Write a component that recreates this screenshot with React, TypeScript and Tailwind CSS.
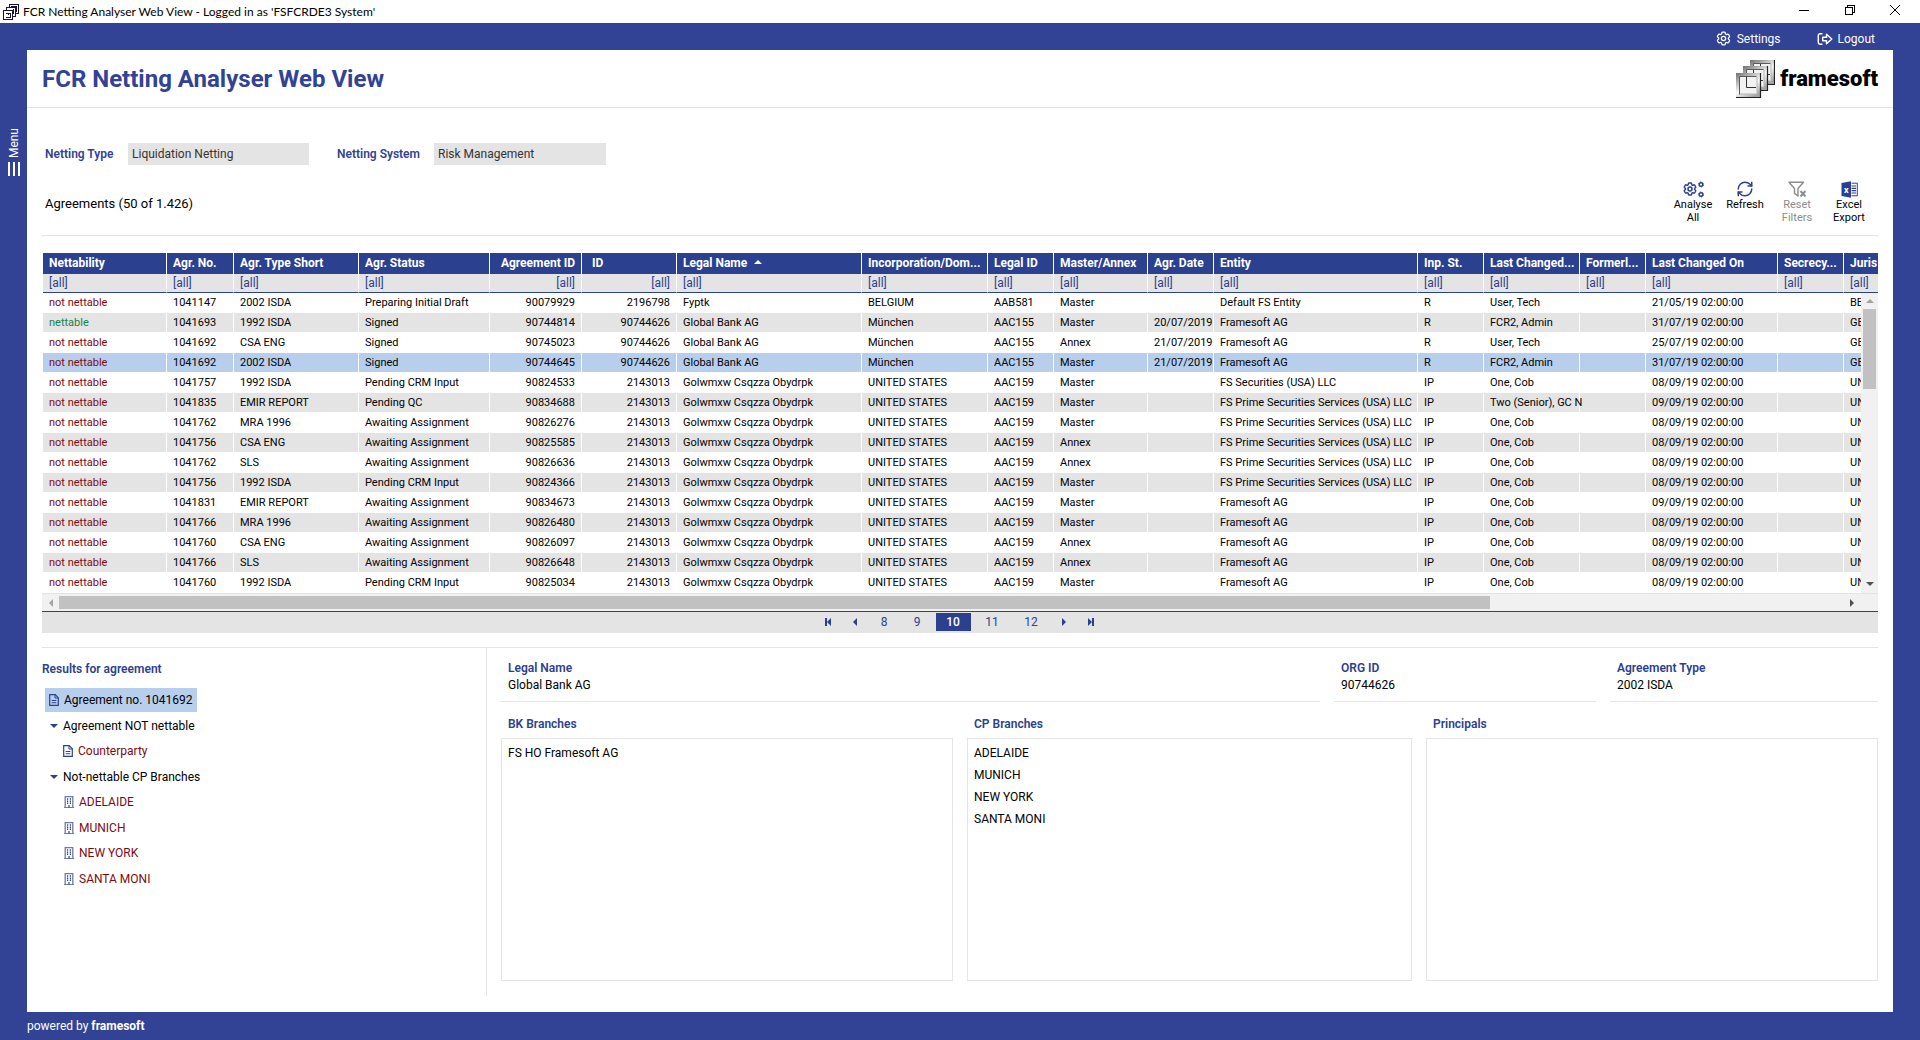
import { useState } from "react";
import { RefreshCw } from "lucide-react";
import { HiOutlineCog6Tooth } from "react-icons/hi2";

type Column = {
  title: string;
  width: string;
  right?: boolean;
  titleLeft?: boolean;
  sorted?: boolean;
};

const columns: Column[] = [
  { title: "Nettability", width: "w-[124px]" },
  { title: "Agr. No.", width: "w-[67px]" },
  { title: "Agr. Type Short", width: "w-[125px]" },
  { title: "Agr. Status", width: "w-[131px]" },
  { title: "Agreement ID", width: "w-[92px]", right: true },
  { title: "ID", width: "w-[95px]", right: true, titleLeft: true },
  { title: "Legal Name", width: "w-[185px]", sorted: true },
  { title: "Incorporation/Dom...", width: "w-[126px]" },
  { title: "Legal ID", width: "w-[66px]" },
  { title: "Master/Annex", width: "w-[94px]" },
  { title: "Agr. Date", width: "w-[66px]" },
  { title: "Entity", width: "w-[204px]" },
  { title: "Inp. St.", width: "w-[66px]" },
  { title: "Last Changed...", width: "w-[96px]" },
  { title: "Formerl...", width: "w-[66px]" },
  { title: "Last Changed On", width: "w-[132px]" },
  { title: "Secrecy...", width: "w-[66px]" },
  { title: "Juris", width: "w-[120px]" },
];

const golw = "Golwmxw Csqzza Obydrpk";
const us = "UNITED STATES";
const prime = "FS Prime Securities Services (USA) LLC";
const sep8 = "08/09/19 02:00:00";
const sep9 = "09/09/19 02:00:00";

const rows: string[][] = [
  ["not nettable", "1041147", "2002 ISDA", "Preparing Initial Draft", "90079929", "2196798", "Fyptk", "BELGIUM", "AAB581", "Master", "", "Default FS Entity", "R", "User, Tech", "", "21/05/19 02:00:00", "", "BE"],
  ["nettable", "1041693", "1992 ISDA", "Signed", "90744814", "90744626", "Global Bank AG", "München", "AAC155", "Master", "20/07/2019", "Framesoft AG", "R", "FCR2, Admin", "", "31/07/19 02:00:00", "", "GE"],
  ["not nettable", "1041692", "CSA ENG", "Signed", "90745023", "90744626", "Global Bank AG", "München", "AAC155", "Annex", "21/07/2019", "Framesoft AG", "R", "User, Tech", "", "25/07/19 02:00:00", "", "GE"],
  ["not nettable", "1041692", "2002 ISDA", "Signed", "90744645", "90744626", "Global Bank AG", "München", "AAC155", "Master", "21/07/2019", "Framesoft AG", "R", "FCR2, Admin", "", "31/07/19 02:00:00", "", "GE"],
  ["not nettable", "1041757", "1992 ISDA", "Pending CRM Input", "90824533", "2143013", golw, us, "AAC159", "Master", "", "FS Securities (USA) LLC", "IP", "One, Cob", "", sep8, "", "UN"],
  ["not nettable", "1041835", "EMIR REPORT", "Pending QC", "90834688", "2143013", golw, us, "AAC159", "Master", "", prime, "IP", "Two (Senior), GC N", "", sep9, "", "UN"],
  ["not nettable", "1041762", "MRA 1996", "Awaiting Assignment", "90826276", "2143013", golw, us, "AAC159", "Master", "", prime, "IP", "One, Cob", "", sep8, "", "UN"],
  ["not nettable", "1041756", "CSA ENG", "Awaiting Assignment", "90825585", "2143013", golw, us, "AAC159", "Annex", "", prime, "IP", "One, Cob", "", sep8, "", "UN"],
  ["not nettable", "1041762", "SLS", "Awaiting Assignment", "90826636", "2143013", golw, us, "AAC159", "Annex", "", prime, "IP", "One, Cob", "", sep8, "", "UN"],
  ["not nettable", "1041756", "1992 ISDA", "Pending CRM Input", "90824366", "2143013", golw, us, "AAC159", "Master", "", prime, "IP", "One, Cob", "", sep8, "", "UN"],
  ["not nettable", "1041831", "EMIR REPORT", "Awaiting Assignment", "90834673", "2143013", golw, us, "AAC159", "Master", "", "Framesoft AG", "IP", "One, Cob", "", sep9, "", "UN"],
  ["not nettable", "1041766", "MRA 1996", "Awaiting Assignment", "90826480", "2143013", golw, us, "AAC159", "Master", "", "Framesoft AG", "IP", "One, Cob", "", sep8, "", "UN"],
  ["not nettable", "1041760", "CSA ENG", "Awaiting Assignment", "90826097", "2143013", golw, us, "AAC159", "Annex", "", "Framesoft AG", "IP", "One, Cob", "", sep8, "", "UN"],
  ["not nettable", "1041766", "SLS", "Awaiting Assignment", "90826648", "2143013", golw, us, "AAC159", "Annex", "", "Framesoft AG", "IP", "One, Cob", "", sep8, "", "UN"],
  ["not nettable", "1041760", "1992 ISDA", "Pending CRM Input", "90825034", "2143013", golw, us, "AAC159", "Master", "", "Framesoft AG", "IP", "One, Cob", "", sep8, "", "UN"],
];

const branches = ["ADELAIDE", "MUNICH", "NEW YORK", "SANTA MONI"];

function AppIcon() {
  return (
    <svg width="16" height="16" viewBox="0 0 16 16" fill="#fff" stroke="#15153f" shapeRendering="crispEdges">
      <path d="M6.5 .5h9v9h-9z" />
      <path d="M3.5 3.5h9v9h-9z" />
      <path d="M.5 6.5h9v9h-9z" />
      <path d="M3 9.500h4v3.500H3M5 9v2M10.500 5v5M8 2.500h5.500v5" fill="none" />
    </svg>
  );
}

function LogoFrame({ x, y }: { x: number; y: number }) {
  return (
    <g transform={`translate(${x} ${y})`}>
      <rect width="25" height="25" fill="url(#metal)" />
      <path d="M0 24.500h24.500V0" fill="none" stroke="#222" strokeWidth="1.200" />
      <rect x="4" y="4" width="17" height="17" fill="#f2f2f2" />
      <path d="M3.500 21.500v-18h17" fill="none" stroke="#5a5a5a" />
      <path d="M4 21h17V4" fill="none" stroke="#b5b5b5" />
      <path d="M10.500 4v10.500H20" fill="none" stroke="#333" />
    </g>
  );
}

function Logo() {
  return (
    <div className="flex items-center gap-[5px]">
      <svg width="39" height="38" viewBox="0 0 39 38">
        <defs>
          <linearGradient id="metal" x1="0" y1="0" x2=".6" y2="1">
            <stop offset="0" stopColor="#6f6f6f" />
            <stop offset=".6" stopColor="#fafafa" />
            <stop offset="1" stopColor="#a5a5a5" />
          </linearGradient>
        </defs>
        <LogoFrame x={14} y={0} />
        <LogoFrame x={7} y={6} />
        <LogoFrame x={0} y={13} />
      </svg>
      <span className="text-[22px] font-black leading-[26px] text-black">framesoft</span>
    </div>
  );
}

function LogoutIcon() {
  return (
    <svg width="16" height="14" viewBox="0 0 16 14" fill="none" stroke="currentColor" strokeWidth="1.500">
      <path d="M5.500 1.700H3A1.700 1.700 0 0 0 1.300 3.400v7.200A1.700 1.700 0 0 0 3 12.300h2.500" />
      <path d="M5.700 5.200h3.800V2.300L14.800 7l-5.300 4.700V8.800H5.700z" strokeLinejoin="round" />
    </svg>
  );
}

function AnalyseIcon() {
  return (
    <span className="flex items-center text-[#2b4190]">
      <HiOutlineCog6Tooth size={16} strokeWidth={2.200} />
      <svg width="6" height="17" viewBox="0 0 6 17" fill="none" stroke="currentColor">
        <circle cx="3" cy="3.500" r="1.800" strokeWidth="1.400" />
        <circle cx="3" cy="3.500" r="2.600" strokeWidth=".8" strokeDasharray="1.400 1.300" />
        <circle cx="3" cy="13.500" r="1.800" strokeWidth="1.400" />
        <circle cx="3" cy="13.500" r="2.600" strokeWidth=".8" strokeDasharray="1.400 1.300" />
      </svg>
    </span>
  );
}

function FilterIcon() {
  return (
    <svg width="19" height="17" viewBox="0 0 19 17" fill="none" stroke="currentColor" strokeWidth="1.400">
      <path d="M1 1.200h14.500L10 7.500V15L6.500 12.400V7.500z" strokeLinejoin="round" />
      <path d="M12.500 10l5 5.500M17.500 10l-5 5.500" strokeWidth="1.900" />
    </svg>
  );
}

function ExcelIcon() {
  return (
    <svg width="17" height="17" viewBox="0 0 17 17" fill="#2b4190">
      <path d="M.5 2L10 .3v16.400L.5 15z" />
      <path d="M10.500 2.200h5.800v12.600h-5.800" fill="none" stroke="#2b4190" />
      <path d="M10.500 5h4.500M10.500 7.300h4.500M10.500 9.600h4.500M10.500 12h4.500" stroke="#2b4190" strokeWidth="1.200" />
      <text x="5.200" y="12" textAnchor="middle" fontSize="9" fontWeight="700" fill="#fff">
        x
      </text>
    </svg>
  );
}

function DocIcon() {
  return (
    <svg width="10" height="12" viewBox="0 0 10 12" fill="none" stroke="#2b4190" className="shrink-0">
      <path d="M1.500 .6h4.700L9.300 3.700v7.700H.7V.6z" strokeWidth="1.200" />
      <path d="M6 .6V4h3.300M2.700 6.500h4.600M2.700 8.700h4.600" />
    </svg>
  );
}

function BuildingIcon() {
  return (
    <svg width="10" height="12" viewBox="0 0 10 12" fill="none" stroke="#6f7aae" className="shrink-0">
      <path d="M1.200 11.500V.7h7.600v10.800" strokeWidth="1.300" />
      <path d="M0 11.500h10" />
      <path d="M3.600 2.200v6M6.400 2.200v6" stroke="#2b4190" strokeWidth="1.200" strokeDasharray="1.500 .7" />
      <path d="M5 9v2.500" stroke="#2b4190" strokeWidth="1.200" />
    </svg>
  );
}

function Triangle({ className, d }: { className: string; d: string }) {
  return (
    <svg viewBox="0 0 8 8" className={className} fill="currentColor">
      <path d={d} />
    </svg>
  );
}

const UP = "M0 6l4-4 4 4z";
const DOWN = "M0 2l4 4 4-4z";
const LEFT = "M6 0L2 4l4 4z";
const RIGHT = "M2 0l4 4-4 4z";

function AgreementTable({ selected, onSelect }: { selected: number; onSelect: (i: number) => void }) {
  return (
    <div className="relative overflow-hidden border-b border-[#e4e4e4] pl-px">
      <table className="w-[1921px] table-fixed border-separate border-spacing-0 text-[11px]">
        <thead>
          <tr className="h-[21px] bg-[#2b4190] text-[12px] text-white">
            {columns.map((c) => (
              <th
                key={c.title}
                className={`${c.width} overflow-hidden whitespace-nowrap border-r border-white p-0 px-[6px] leading-[19px] font-bold ${
                  c.right && !c.titleLeft ? "text-right" : "text-left"
                } ${c.titleLeft ? "pl-[10px]" : ""}`}
              >
                {c.title}
                {c.sorted && <Triangle className="mb-1 ml-[7px] inline size-2" d={UP} />}
              </th>
            ))}
          </tr>
          <tr className="h-[19px] bg-[#e4e4e4]">
            {columns.map((c) => (
              <td key={c.title} className="border-r border-b border-r-white border-b-[#2b4190] p-0 px-[6px]">
                <input
                  aria-label={c.title}
                  defaultValue="[all]"
                  className={`block h-[18px] w-full bg-transparent text-[12px] text-[#2b4190] outline-none ${
                    c.right ? "text-right" : ""
                  }`}
                />
              </td>
            ))}
          </tr>
        </thead>
        <tbody>
          {rows.map((row, i) => (
            <tr
              key={i}
              onClick={() => onSelect(i)}
              className={`h-5 ${i === selected ? "bg-[#b7cfed]" : i % 2 ? "bg-[#e4e4e4]" : "bg-white"}`}
            >
              {row.map((cell, j) => (
                <td
                  key={j}
                  className={`whitespace-nowrap border-r border-b border-white p-0 px-[6px] leading-[19px] ${
                    columns[j].right ? "text-right" : ""
                  } ${j > 0 ? "text-black" : cell === "nettable" ? "text-[#14804f]" : "text-[#7d0a12]"}`}
                >
                  {cell}
                </td>
              ))}
            </tr>
          ))}
        </tbody>
      </table>

      {/* Vertical scrollbar, lies over the last column */}
      <div className="absolute top-10 right-0 bottom-0 flex w-[17px] flex-col items-center bg-[#f1f1f1]">
        <Triangle className="my-1 size-2 shrink-0 text-[#a3a3a3]" d={UP} />
        <div className="h-20 w-[13px] bg-[#c1c1c1]" />
        <Triangle className="mt-auto mb-[5px] size-2 shrink-0 text-[#505050]" d={DOWN} />
      </div>
    </div>
  );
}

function Pager() {
  const [page, setPage] = useState(10);
  return (
    <nav className="flex h-[22px] items-center justify-center border-t border-[#2b4190] bg-[#e4e4e4] pr-[2px] pb-[2px] text-[12px] text-[#2b4190]">
      <button aria-label="First page" className="flex w-[26px] items-center justify-center">
        <span className="h-2 w-[2px] bg-[#2b4190]" />
        <Triangle className="-ml-[2px] size-2" d={LEFT} />
      </button>
      <button aria-label="Previous page" className="flex w-[26px] justify-center">
        <Triangle className="size-2" d={LEFT} />
      </button>
      {[8, 9, 10, 11, 12].map((n) => (
        <button
          key={n}
          onClick={() => setPage(n)}
          className={`mx-[2px] h-[18px] leading-[18px] ${n < 10 ? "w-[29px]" : "w-[35px]"} ${
            n === page ? "bg-[#2b4190] font-medium text-white" : ""
          }`}
        >
          {n}
        </button>
      ))}
      <button aria-label="Next page" className="flex w-[26px] justify-center">
        <Triangle className="size-2" d={RIGHT} />
      </button>
      <button aria-label="Last page" className="flex w-[26px] items-center justify-center">
        <Triangle className="-mr-[2px] size-2" d={RIGHT} />
        <span className="h-2 w-[2px] bg-[#2b4190]" />
      </button>
    </nav>
  );
}

function Field({ label, value }: { label: string; value: string }) {
  return (
    <div className="border-b border-[#e4e4e4] px-[7px] pb-[7px] leading-[17px]">
      <div className="font-semibold text-[#2b4190]">{label}</div>
      <div>{value}</div>
    </div>
  );
}

function BranchBox({ label, items }: { label: string; items: string[] }) {
  return (
    <section className="flex flex-col">
      <h3 className="mb-[5px] px-[7px] leading-[18px] font-semibold text-[#2b4190]">{label}</h3>
      <ul className="flex-1 border border-[#e4e4e4] px-[6px] py-[3px] leading-[22px]">
        {items.map((item) => (
          <li key={item}>{item}</li>
        ))}
      </ul>
    </section>
  );
}

export default function App() {
  const [selected, setSelected] = useState(3);

  return (
    <div className="flex min-h-screen flex-col bg-[#324294] font-[Roboto,'Liberation_Sans',sans-serif] text-[12px] text-black">
      {/* Window title bar */}
      <div className="flex h-[23px] items-center bg-white pr-[2px] pl-[3px]">
        <AppIcon />
        <span className="ml-1 flex-1 font-[Lato,'Open_Sans',sans-serif]">
          FCR Netting Analyser Web View - Logged in as &apos;FSFCRDE3 System&apos;
        </span>
        <div className="-mt-[3px] flex items-center">
          <button aria-label="Minimize" className="flex w-[46px] justify-center">
            <svg width="10" height="10" stroke="#000" shapeRendering="crispEdges">
              <path d="M0 5.500h10" />
            </svg>
          </button>
          <button aria-label="Restore" className="flex w-[45px] justify-center">
            <svg width="10" height="10" fill="none" stroke="#000" shapeRendering="crispEdges">
              <path d="M.5 2.500h7v7h-7zM2.500 2V.5h7v7H8" />
            </svg>
          </button>
          <button aria-label="Close" className="flex w-[46px] justify-center">
            <svg width="10" height="10" stroke="#000">
              <path d="M0 0l10 10M10 0L0 10" />
            </svg>
          </button>
        </div>
      </div>

      {/* Session links */}
      <div className="flex h-[27px] items-center justify-end gap-9 pt-1 pr-[45px] text-white">
        <a href="#settings" className="flex items-center gap-[5px]">
          <HiOutlineCog6Tooth size={17} strokeWidth={1.800} />
          Settings
        </a>
        <a href="#logout" className="flex items-center gap-[5px]">
          <LogoutIcon />
          Logout
        </a>
      </div>

      <div className="flex flex-1">
        {/* Collapsed menu */}
        <aside className="w-[27px] pt-[78px] pl-[7px] text-white">
          <button className="flex flex-col items-center gap-1">
            <span className="rotate-180 leading-[14px] [writing-mode:vertical-rl]">Menu</span>
            <span className="flex h-[14px] gap-[3px]">
              <span className="w-[2px] bg-white" />
              <span className="w-[2px] bg-white" />
              <span className="w-[2px] bg-white" />
            </span>
          </button>
        </aside>

        <main className="mr-[27px] flex min-w-0 flex-1 flex-col bg-white">
          <header className="flex h-[58px] items-center justify-between border-b border-[#e4e4e4] px-[15px]">
            <h1 className="text-[24px] font-bold text-[#324294]">FCR Netting Analyser Web View</h1>
            <Logo />
          </header>

          <div className="flex flex-1 flex-col px-[15px] pb-4">
            {/* Netting selection */}
            <div className="mt-[35px] ml-[3px] flex items-center">
              <label htmlFor="type" className="w-[83px] font-semibold text-[#324294]">
                Netting Type
              </label>
              <input
                id="type"
                readOnly
                defaultValue="Liquidation Netting"
                className="mr-7 h-[22px] w-[181px] bg-[#e4e4e4] px-1 text-[#333]"
              />
              <label htmlFor="system" className="w-[97px] font-semibold text-[#324294]">
                Netting System
              </label>
              <input
                id="system"
                readOnly
                defaultValue="Risk Management"
                className="h-[22px] w-[172px] bg-[#e4e4e4] px-1 text-[#333]"
              />
            </div>

            {/* Agreements heading and toolbar */}
            <div className="mt-[15px] flex h-14 items-start justify-between border-b border-[#e4e4e4]">
              <h2 className="mt-[14px] ml-[3px] text-[13px]">Agreements (50 of 1.426)</h2>
              <div className="mr-[3px] flex text-[11px] leading-[13px]">
                <button className="flex w-[52px] flex-col items-center">
                  <span className="flex h-[18px] items-center">
                    <AnalyseIcon />
                  </span>
                  <span>Analyse<br />All</span>
                </button>
                <button className="flex w-[52px] flex-col items-center">
                  <span className="flex h-[18px] items-center">
                    <RefreshCw size={18} strokeWidth={2} className="text-[#2b4190]" />
                  </span>
                  Refresh
                </button>
                <button disabled className="flex w-[52px] flex-col items-center text-[#8c8c8c]">
                  <span className="flex h-[18px] items-center">
                    <FilterIcon />
                  </span>
                  <span>Reset<br />Filters</span>
                </button>
                <button className="flex w-[52px] flex-col items-center">
                  <span className="flex h-[18px] items-center">
                    <ExcelIcon />
                  </span>
                  <span>Excel<br />Export</span>
                </button>
              </div>
            </div>

            <div className="mt-[17px]">
              <AgreementTable selected={selected} onSelect={setSelected} />
              {/* Horizontal scrollbar */}
              <div className="flex h-[17px] items-center bg-[#f1f1f1] pr-[22px] pl-[5px]">
                <Triangle className="mr-1 size-2 text-[#a3a3a3]" d={LEFT} />
                <div className="flex flex-1">
                  <div className="h-[13px] w-4/5 bg-[#c1c1c1]" />
                </div>
                <Triangle className="size-2 text-[#505050]" d={RIGHT} />
              </div>
              <Pager />
            </div>

            {/* Details of the selected agreement */}
            <div className="mt-[14px] flex flex-1 border-t border-[#e4e4e4]">
              <section className="w-[445px] shrink-0 border-r border-[#e4e4e4] pt-3">
                <h3 className="leading-[18px] font-semibold text-[#2b4190]">Results for agreement</h3>
                <ul className="mt-[10px] ml-[3px] flex h-[203px] flex-col items-start justify-between leading-6">
                  <li className="flex items-center gap-[5px] bg-[#b7cfed] pr-[5px] pl-1">
                    <DocIcon />
                    Agreement no. 1041692
                  </li>
                  <li className="flex items-center gap-[5px] pl-[5px]">
                    <Triangle className="size-2 text-[#2b4190]" d={DOWN} />
                    Agreement NOT nettable
                  </li>
                  <li className="flex items-center gap-[5px] pl-[18px] text-[#7d0a12]">
                    <DocIcon />
                    Counterparty
                  </li>
                  <li className="flex items-center gap-[5px] pl-[5px]">
                    <Triangle className="size-2 text-[#2b4190]" d={DOWN} />
                    Not-nettable CP Branches
                  </li>
                  {branches.map((b) => (
                    <li key={b} className="flex items-center gap-[5px] pl-[19px] text-[#7d0a12]">
                      <BuildingIcon />
                      {b}
                    </li>
                  ))}
                </ul>
              </section>

              <section className="flex flex-1 flex-col pt-3 pb-[15px] pl-[14px]">
                <div className="grid grid-cols-[819fr_262fr_268fr] gap-[14px]">
                  <Field label="Legal Name" value="Global Bank AG" />
                  <Field label="ORG ID" value="90744626" />
                  <Field label="Agreement Type" value="2002 ISDA" />
                </div>
                <div className="mt-[13px] grid flex-1 grid-cols-[452fr_445fr_452fr] gap-[14px]">
                  <BranchBox label="BK Branches" items={["FS HO Framesoft AG"]} />
                  <BranchBox label="CP Branches" items={branches} />
                  <BranchBox label="Principals" items={[]} />
                </div>
              </section>
            </div>
          </div>
        </main>
      </div>

      <footer className="flex h-7 items-center pl-[27px] text-white">
        <span>
          powered by <b>framesoft</b>
        </span>
      </footer>
    </div>
  );
}
